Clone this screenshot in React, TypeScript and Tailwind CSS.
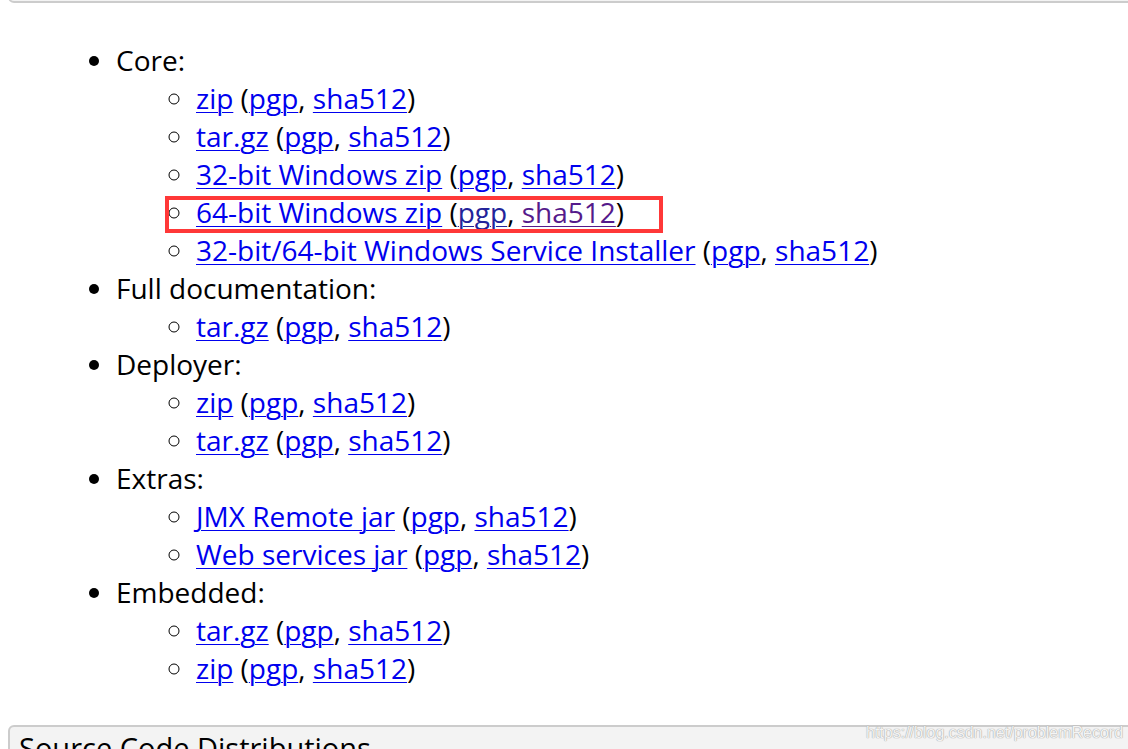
const linkCls = "text-[#0000ee] underline decoration-1 underline-offset-[3px]";

type Sub = { label: string; pgp?: string; sha?: string };

const groups: { title: string; items: Sub[] }[] = [
  {
    title: "Core:",
    items: [
      { label: "zip" },
      { label: "tar.gz" },
      { label: "32-bit Windows zip" },
      { label: "64-bit Windows zip", pgp: "text-[#23239a]", sha: "text-[#551a8b]" },
      { label: "32-bit/64-bit Windows Service Installer" },
    ],
  },
  { title: "Full documentation:", items: [{ label: "tar.gz" }] },
  { title: "Deployer:", items: [{ label: "zip" }, { label: "tar.gz" }] },
  { title: "Extras:", items: [{ label: "JMX Remote jar" }, { label: "Web services jar" }] },
  { title: "Embedded:", items: [{ label: "tar.gz" }, { label: "zip" }] },
];

function Link({ children, color }: { children: string; color?: string }) {
  return (
    <a href="#" className={`${linkCls} ${color ?? ""}`}>
      {children}
    </a>
  );
}

export default function App() {
  return (
    <div
      className="relative h-[749px] w-[1128px] overflow-hidden bg-white text-black"
      style={{ fontFamily: '"Open Sans", "Noto Sans", sans-serif' }}
    >
      {/* Heading box above, only its bottom edge shows */}
      <div className="ml-[8px] -mt-[40px] mr-[-20px] h-[43px] overflow-hidden rounded-md border-2 border-[#cccccc] bg-[#f3f3f3] pl-[9px] text-[29px] leading-[38px]">
        Binary Distributions
      </div>

      <ul className="mt-[38px] list-outside list-disc pl-[116px] text-[28px] leading-[38px]">
        {groups.map((g) => (
          <li key={g.title}>
            {g.title}
            <ul className="list-outside list-[circle] pl-[80px]">
              {g.items.map((it, i) => (
                <li key={i}>
                  <Link>{it.label}</Link> (<Link color={it.pgp}>pgp</Link>,{" "}
                  <Link color={it.sha}>sha512</Link>)
                </li>
              ))}
            </ul>
          </li>
        ))}
      </ul>

      {/* Next section heading, cut off at the bottom */}
      <div className="ml-[8px] mt-[38px] mr-[-20px] h-[60px] rounded-md border-2 border-[#cccccc] bg-[#f3f3f3] pl-[9px] pt-[2px] text-[29px] leading-[38px]">
        Source Code Distributions
      </div>

      {/* Red highlight */}
      <div className="absolute left-[165px] top-[196px] h-[37px] w-[498px] border-[4px] border-[#ff3838]" />

      {/* Watermark */}
      <div
        className="absolute left-[866px] top-[721px] text-[16px] text-[#f4f4f4]"
        style={{ fontFamily: '"Liberation Sans", Arial, sans-serif', textShadow: "0 0 1px #9a9a9a, 0 0 1px #b0b0b0" }}
      >
        https://blog.csdn.net/problemRecord
      </div>
    </div>
  );
}
